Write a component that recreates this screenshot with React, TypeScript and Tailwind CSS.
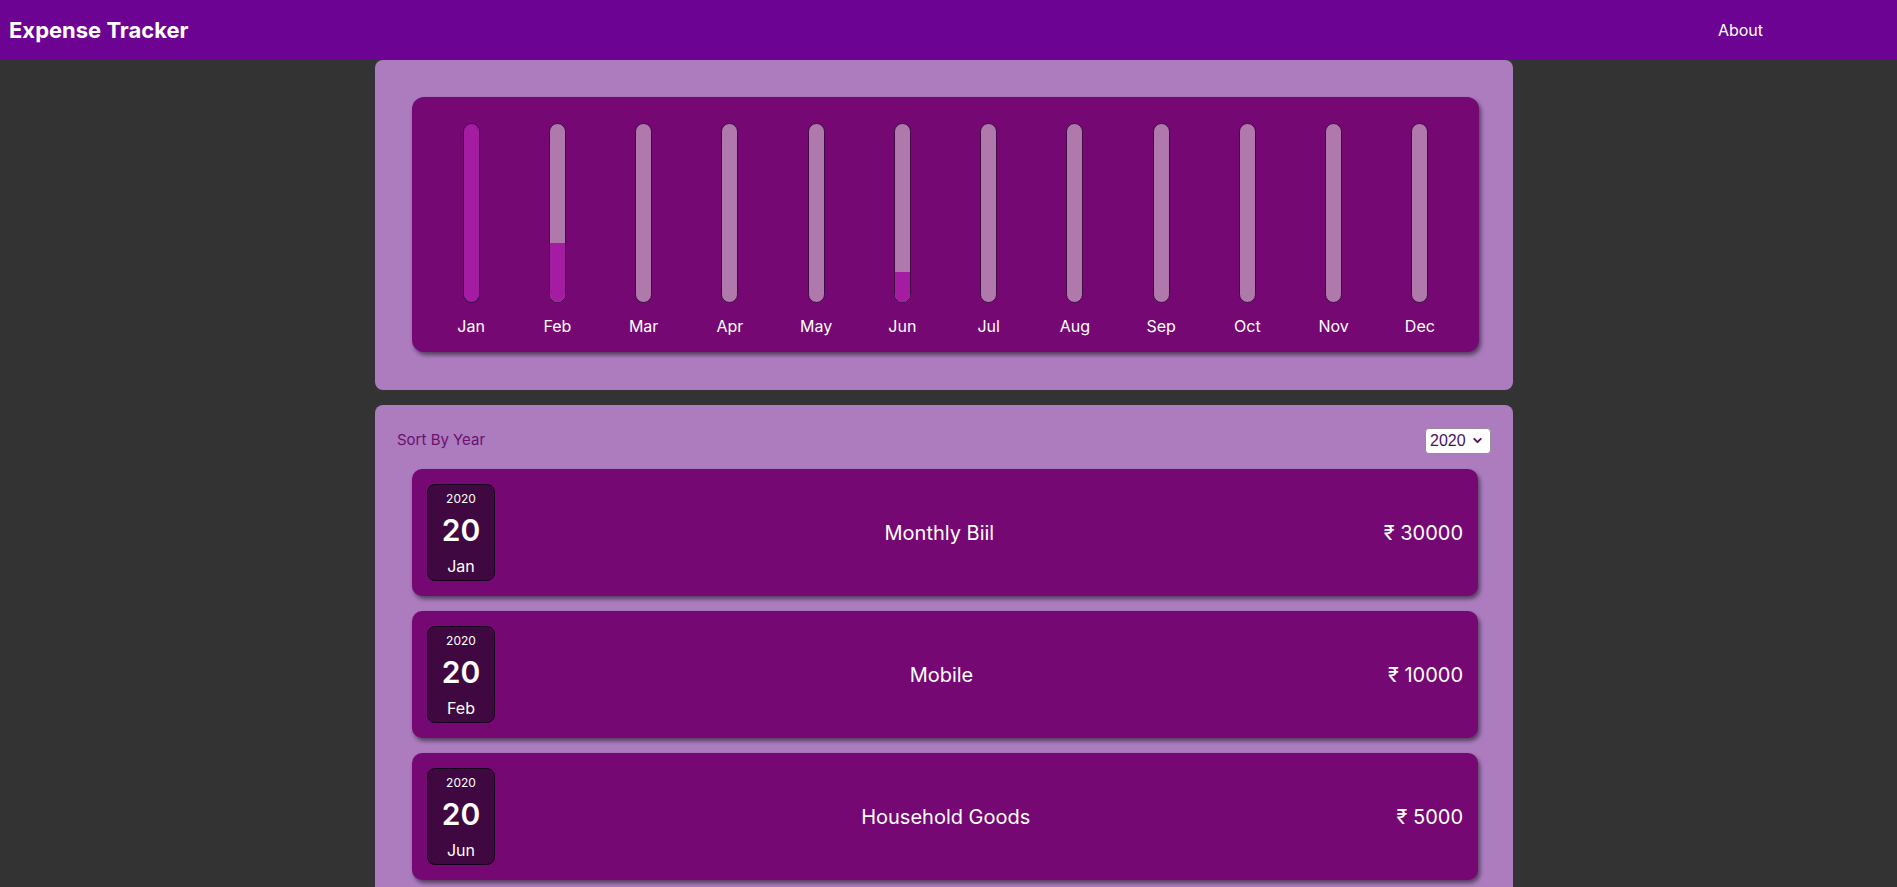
import { ReactElement } from 'react'
import { ChevronDown } from 'lucide-react'

type Expense = {
  id: string
  title: string
  amount: number
  date: Date
}

const MONTHS = ['Jan', 'Feb', 'Mar', 'Apr', 'May', 'Jun', 'Jul', 'Aug', 'Sep', 'Oct', 'Nov', 'Dec']

const expenses: Expense[] = [
  { id: 'e1', title: 'Monthly Biil', amount: 30000, date: new Date(2020, 0, 20) },
  { id: 'e2', title: 'Mobile', amount: 10000, date: new Date(2020, 1, 20) },
  { id: 'e3', title: 'Household Goods', amount: 5000, date: new Date(2020, 5, 20) },
]

const ChartBar = ({ label, fill }: { label: string; fill: number }): ReactElement => {
  return (
    <div className="flex flex-1 flex-col items-center">
      <div className="flex h-[180px] w-[17px] flex-col justify-end overflow-hidden rounded-full border border-[#3f0b45] bg-[#b079ab]">
        <div className="w-full bg-[#a41ca1]" style={{ height: `${fill}%` }} />
      </div>
      <div className="mt-[12px] text-[16px] leading-[22px] text-white">{label}</div>
    </div>
  )
}

const ExpenseChart = ({ items }: { items: Expense[] }): ReactElement => {
  const totals = MONTHS.map(() => 0)
  items.forEach((item) => {
    totals[item.date.getMonth()] += item.amount
  })
  const max = Math.max(...totals)

  return (
    <div className="flex rounded-[12px] bg-[#760874] px-[16px] pt-[26px] pb-[15px] shadow-[2px_3px_4px_rgba(0,0,0,0.5)]">
      {MONTHS.map((month, i) => (
        <ChartBar key={month} label={month} fill={max > 0 ? (totals[i] / max) * 100 : 0} />
      ))}
    </div>
  )
}

const ExpenseDate = ({ date }: { date: Date }): ReactElement => {
  return (
    <div className="flex h-[97px] w-[68px] shrink-0 flex-col items-center rounded-[8px] border border-[#14001a] bg-[#3f0840] pt-[6px] text-white">
      <div className="text-[12px] leading-[16px]">{date.getFullYear()}</div>
      <div className="mt-[5px] text-[30px] leading-[36px] font-semibold">{date.getDate()}</div>
      <div className="mt-[7px] text-[16px] leading-[22px]">{MONTHS[date.getMonth()]}</div>
    </div>
  )
}

const ExpenseItem = ({ item }: { item: Expense }): ReactElement => {
  return (
    <div className="flex items-center rounded-[10px] bg-[#760874] p-[15px] shadow-[2px_3px_4px_rgba(0,0,0,0.5)]">
      <ExpenseDate date={item.date} />
      <div className="flex-1 text-center text-[20px] text-white">{item.title}</div>
      <div className="text-[20px] text-white">₹ {item.amount}</div>
    </div>
  )
}

const App = (): ReactElement => {
  return (
    <div className="min-h-screen bg-[#333333] font-[family-name:Inter,sans-serif]">
      <nav className="flex h-[60px] items-center justify-between bg-[#6c0393] pl-[9px] pr-[134px]">
        <div className="text-[22px] font-bold text-white">Expense Tracker</div>
        <a href="#" className="text-[16px] text-white">
          About
        </a>
      </nav>

      <div className="flex flex-col items-center pr-[9px]">
        <section className="w-[1138px] rounded-lg bg-[#ac7cbf] pl-[37px] pr-[34px] pt-[37px] pb-[38px]">
          <ExpenseChart items={expenses} />
        </section>

        <section className="mt-[15px] w-[1138px] rounded-lg bg-[#ac7cbf] px-[22px] pt-[23px] pb-[36px]">
          <div className="flex h-[25px] items-center justify-between">
            <label className="text-[15px] text-[#6b106b]">Sort By Year</label>
            <div className="flex h-[26px] w-[66px] items-center justify-between rounded-[4px] border border-[#9a8aa0] bg-white pl-[4px] pr-[6px] font-[family-name:Liberation_Sans,Arial,sans-serif] text-[16px] text-[#4a1060]">
              <span>2020</span>
              <ChevronDown size={13} strokeWidth={3.5} className="text-[#5a0a5e]" />
            </div>
          </div>

          <ul className="ml-[15px] mr-[13px] mt-[16px] flex flex-col gap-[15px]">
            {expenses.map((item) => (
              <li key={item.id}>
                <ExpenseItem item={item} />
              </li>
            ))}
          </ul>
        </section>
      </div>
    </div>
  )
}

export default App
